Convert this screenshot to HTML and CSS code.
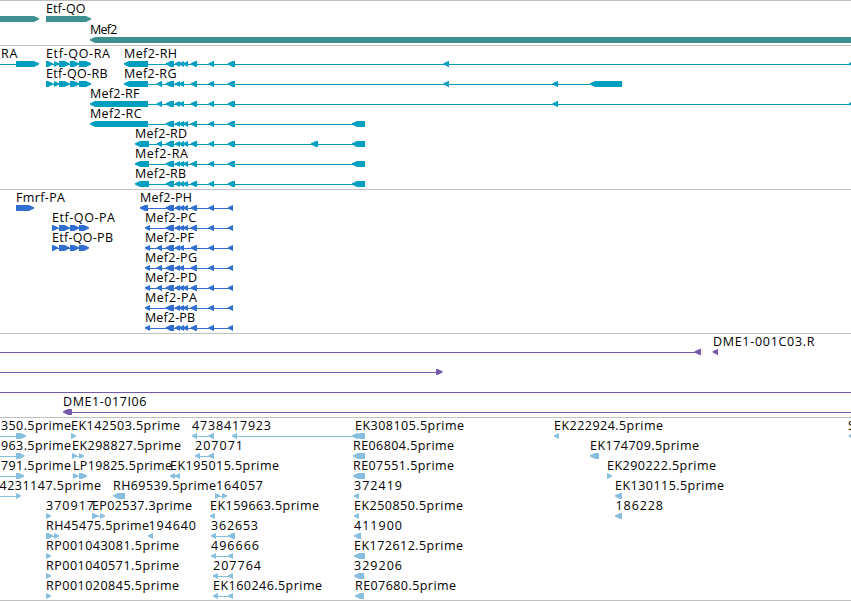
FILE: index.html
```
<!DOCTYPE html>
<html>
  <head>
    <meta charset="utf-8">
    <title>Mef2 region</title>
    <link rel="stylesheet" href="styles.css">
  </head>
  <body>
    <div id="tracks">
      <div class="track genes" id="genes"></div>
      <div class="track transcripts" id="transcripts"></div>
      <div class="track proteins" id="proteins"></div>
      <div class="track clones" id="clones"></div>
      <div class="track ests" id="ests"></div>
    </div>
    <script src="tracks.js"></script>
  </body>
</html>
```

FILE: styles.css
```
body {
  margin: 0;
  background-color: #fff;
  overflow: hidden;
}

#tracks {
  border-top: 1px solid #c0c0c0;
}

.track {
  border-bottom: 1px solid #c0c0c0;
  padding-bottom: 3px;
}

/* arrows reach one pixel below their row */
.track svg {
  display: block;
  width: 100%;
  height: 20px;
  overflow: visible;
}

.track text {
  font-family: "Open Sans", "DejaVu Sans", sans-serif;
  font-size: 12.5px;
  fill: #000;
}

.genes svg:first-child {
  height: 21px;
}

.genes {
  fill: #3f9090;
}

.transcripts {
  fill: #009fc0;
}

.proteins {
  fill: #306fd0;
}

.clones {
  fill: #7559ac;
}

.ests {
  fill: #88bede;
  padding-bottom: 2px;
}
```

FILE: tracks.js
```
var SVG = 'http://www.w3.org/2000/svg';
var HEAD = 5;

// A feature is [label, label start, label end, strand, blocks, line start, line end].
// The line runs from the first block to the last when it is not given.

// exons shared by the Mef2 transcripts and proteins
var two = [[175, 180], [179, 184]];
var three = [[175, 180], [179, 184], [183, 188]];
var late = [[190.7, 197], [208.5, 214]];

function mef2(first, extra, small, last) {
  return [first].concat(extra ? [[156.7, 162]] : [], [[165.7, 174]], small, late, last);
}

var etf = [[46, 53], [54, 59], [59, 69.5], [70, 79], [79, 91]];
var etfP = [[52, 58], [59, 69.5], [70, 79], [79, 89]];
var end = [227.7, 235];
var utr = [352, 365];

var data = {
  genes: [
    [['', 0, 0, '+', [[-20, 39]]],
     ['Etf-QO', 46, 85.5, '+', [[46, 91]]]],
    [['Mef2', 90, 117.5, '-', [[90, 900]]]]
  ],
  transcripts: [
    [['RA', 1, 17.5, '+', [[16, 39]], -1, 37],
     ['Etf-QO-RA', 46, 110, '+', etf],
     ['Mef2-RH', 124, 177, '-', mef2([124, 148], false, three, [end, [443.5, 449], [849, 856]])]],
    [['Etf-QO-RB', 46, 107.5, '+', etf],
     ['Mef2-RG', 124, 176.5, '-', mef2([124, 148], true, two, [end, [443.5, 449], [552.5, 558], [590, 622]])]],
    [['Mef2-RF', 90, 139.5, '-', mef2([90, 148], true, two, [end, [552.5, 558], [849, 856]])]],
    [['Mef2-RC', 90, 141.5, '-', mef2([90, 148], false, three, [end, utr])]],
    [['Mef2-RD', 135, 187, '-', mef2([135, 149], true, three, [end, [311, 318], utr])]],
    [['Mef2-RA', 135, 188, '-', mef2([135, 149], false, three, [end, utr])]],
    [['Mef2-RB', 135, 186, '-', mef2([135, 149], false, three, [end, utr])]]
  ],
  proteins: [
    [['Fmrf-PA', 16, 65, '+', [[16, 34]]],
     ['Mef2-PH', 140, 192, '-', mef2([140, 148], false, three, [[228, 233]])]],
    [['Etf-QO-PA', 52, 115, '+', etfP],
     ['Mef2-PC', 145, 196, '-', mef2([145, 150], false, three, [[228, 233]])]],
    [['Etf-QO-PB', 52, 113, '+', etfP],
     ['Mef2-PF', 145, 194, '-', mef2([145, 150], true, two, [[228, 233]])]],
    [['Mef2-PG', 145, 197, '-', mef2([145, 150], true, two, [[228, 233]])]],
    [['Mef2-PD', 145, 197, '-', mef2([145, 150], true, three, [[228, 233]])]],
    [['Mef2-PA', 145, 197, '-', mef2([145, 150], false, three, [[228, 233]])]],
    [['Mef2-PB', 145, 195, '-', mef2([145, 150], false, three, [[228, 233]])]]
  ],
  clones: [
    [['', 0, 0, '-', [[694.5, 701]], -1, 701],
     ['DME1-001C03.R', 713, 814.5, '-', [[712.7, 718]]]],
    [['', 0, 0, '+', [[436, 442.5]], -1, 440]],
    [['', 0, 0, '-', [], -1, 900]],
    [['DME1-017I06', 63, 146.5, '-', [[63, 72]], 65, 900]]
  ],
  ests: [
    [['350.5prime', 1, 71, '+', [[16, 26]], -1, 24],
     ['EK142503.5prime', 71, 180, '+', [[71, 76]]],
     ['4738417923', 192, 271, '-', [[192, 197], [208.5, 214]]],
     ['', 0, 0, '-', [[232, 237], [352, 358]]],
     ['EK308105.5prime', 355, 464, '-', [[355, 365]]],
     ['EK222924.5prime', 554, 663, '-', [[554, 559]]],
     ['S', 848, 856, '-', [[848.7, 856]]]],
    [['963.5prime', 1, 71, '+', [[16, 24.5]], -1, 23],
     ['EK298827.5prime', 72, 181, '+', [[72, 77], [79, 84]]],
     ['207071', 195, 243, '-', [[195, 200], [208.5, 214]]],
     ['RE06804.5prime', 353, 454, '-', [[353, 365]]],
     ['EK174709.5prime', 590, 699, '-', [[590, 599]]]],
    [['791.5prime', 1, 71, '+', [[16, 24]], -1, 22],
     ['LP19825.5prime', 73, 172, '+', [[73, 78], [79, 87]]],
     ['EK195015.5prime', 170, 279, '-', [[170, 175], [175, 180]]],
     ['RE07551.5prime', 353, 454, '-', [[353, 365]]],
     ['EK290222.5prime', 607, 716, '+', [[607, 612]]]],
    [['4231147.5prime', -0.5, 101, '+', [[16, 21]], -1, 19],
     ['RH69539.5prime', 113, 216, '-', [[113, 125]]],
     ['164057', 216, 263, '+', [[215, 220], [222, 227]]],
     ['372419', 354, 402, '-', [[354, 359]]],
     ['EK130115.5prime', 615, 724, '-', [[615, 622]]]],
    [['370917', 46, 94, '+', [[46, 51]]],
     ['EP02537.3prime', 92, 192, '+', [[92, 98], [100, 105]]],
     ['EK159663.5prime', 210, 319, '-', [[210, 215]]],
     ['EK250850.5prime', 354, 463, '-', [[354, 359]]],
     ['186228', 615.5, 663, '-', [[615, 622]]]],
    [['RH45475.5prime', 46, 149, '+', [[46, 53], [54, 59]]],
     ['194640', 148.5, 196, '-', [[148, 153]]],
     ['362653', 211, 258, '-', [[211, 216], [228, 235]]],
     ['411900', 354, 402, '-', [[354, 361]]]],
    [['RP001043081.5prime', 46, 179, '+', [[46, 51]]],
     ['496666', 211, 259, '-', [[211, 216], [228, 233]]],
     ['EK172612.5prime', 354, 463, '-', [[354, 365]]]],
    [['RP001040571.5prime', 46, 179, '+', [[46, 51]]],
     ['207764', 213, 261, '-', [[213, 218], [228, 233]]],
     ['329206', 354, 402, '-', [[354, 364]]]],
    [['RP001020845.5prime', 46, 179, '+', [[46, 51]]],
     ['EK160246.5prime', 213, 322, '-', [[213, 218], [228, 233]]],
     ['RE07680.5prime', 355, 456, '-', [[355, 364]]]]
  ]
};

function add(parent, name, attrs) {
  var el = document.createElementNS(SVG, name);
  for (var key in attrs) {
    el.setAttribute(key, attrs[key]);
  }
  parent.appendChild(el);
  return el;
}

// a box that tapers on the side it is read towards
function arrow(a, b, strand, top) {
  var low = top + 6;
  if (strand == '+') {
    return [a, top, b - HEAD, top, b, top + 2.2, b, top + 3.6, b - HEAD, low, a, low].join(' ');
  }
  return [b, top, a + HEAD, top, a, top + 2.2, a, top + 3.6, a + HEAD, low, b, low].join(' ');
}

function drawRow(track, features, top) {
  var svg = add(track, 'svg', {});
  features.forEach(function (f) {
    var blocks = f[4];
    var from = f[5], to = f[6];
    if (from === undefined && blocks.length > 1) {
      from = blocks[0][0] + 2;
      to = blocks[blocks.length - 1][1] - 2;
    }
    if (from !== undefined) {
      add(svg, 'rect', { x: from, y: top + 3, width: to - from, height: 1 });
    }
    blocks.forEach(function (b) {
      add(svg, 'polygon', { points: arrow(b[0], b[1], f[3], top) });
    });
    if (f[0]) {
      var text = add(svg, 'text', { x: f[1], y: top - 3, textLength: f[2] - f[1] });
      text.textContent = f[0];
    }
  });
}

for (var id in data) {
  data[id].forEach(function (features) {
    drawRow(document.getElementById(id), features, 15);
  });
}
```
